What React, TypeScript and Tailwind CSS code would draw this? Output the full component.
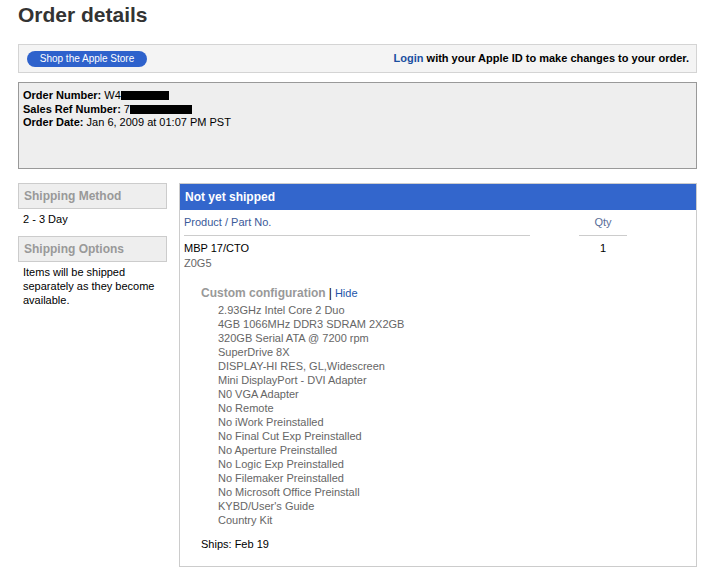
const configItems = [
  '2.93GHz Intel Core 2 Duo',
  '4GB 1066MHz DDR3 SDRAM 2X2GB',
  '320GB Serial ATA @ 7200 rpm',
  'SuperDrive 8X',
  'DISPLAY-HI RES, GL,Widescreen',
  'Mini DisplayPort - DVI Adapter',
  'N0 VGA Adapter',
  'No Remote',
  'No iWork Preinstalled',
  'No Final Cut Exp Preinstalled',
  'No Aperture Preinstalled',
  'No Logic Exp Preinstalled',
  'No Filemaker Preinstalled',
  'No Microsoft Office Preinstall',
  "KYBD/User's Guide",
  'Country Kit',
];

const SideHeader = ({ label }: { label: string }) => (
  <div className="h-[26px] border border-[#cccccc] bg-[#eeeeee] px-[5px] flex items-center text-[12px] font-bold text-[#999999]">
    {label}
  </div>
);

export default function App() {
  return (
    <div className="w-[709px] min-h-[580px] bg-white pl-[18px] pr-[12px] font-['Liberation_Sans',Arial,sans-serif] text-[11px] text-black">
      <h1 className="pt-[3px] text-[21px] leading-[24px] font-bold text-[#333333]">Order details</h1>

      {/* login bar */}
      <div className="mt-[17px] h-[29px] border border-[#d4d4d4] bg-[#f4f4f4] pl-[8px] pr-[7px] flex items-center justify-between">
        <button className="h-[16px] w-[120px] rounded-full bg-[#2e62cc] text-[10px] leading-[16px] text-white">
          Shop the Apple Store
        </button>
        <p className="font-bold text-[11px]">
          <span className="text-[#1a4fa0]">Login</span> with your Apple ID to make changes to your order.
        </p>
      </div>

      {/* order info */}
      <div className="mt-[9px] h-[87px] border border-[#999999] bg-[#eeeeee] px-[4px] pt-[6px] leading-[13.5px]">
        <div>
          <b>Order Number:</b> W4<span className="inline-block w-[48px] h-[9px] bg-black align-[-1px]" />
        </div>
        <div>
          <b>Sales Ref Number:</b> 7<span className="inline-block w-[62px] h-[9px] bg-black align-[-1px]" />
        </div>
        <div>
          <b>Order Date:</b> Jan 6, 2009 at 01:07 PM PST
        </div>
      </div>

      <div className="mt-[14px] flex gap-[12px]">
        {/* left column */}
        <div className="w-[149px] shrink-0">
          <SideHeader label="Shipping Method" />
          <p className="px-[5px] pt-[3px] pb-[10px] leading-[14px]">2 - 3 Day</p>
          <SideHeader label="Shipping Options" />
          <p className="px-[5px] pt-[3px] leading-[14px]">
            Items will be shipped separately as they become available.
          </p>
        </div>

        {/* shipment panel */}
        <div className="flex-1 h-[384px] border border-[#cccccc]">
          <div className="h-[26px] bg-[#3366cc] px-[5px] flex items-center text-[12px] font-bold text-white">
            Not yet shipped
          </div>
          <div className="px-[4px]">
            <div className="flex items-end h-[26px]">
              <div className="w-[346px] h-full border-b border-[#cccccc] flex items-center text-[#3a5a99]">
                Product / Part No.
              </div>
              <div className="ml-[49px] w-[48px] h-full border-b border-[#cccccc] flex items-center justify-center text-[#5a6e99]">
                Qty
              </div>
            </div>
            <div className="flex pt-[5px]">
              <div className="w-[346px] leading-[15px]">
                <div>MBP 17/CTO</div>
                <div className="text-[#666666]">Z0G5</div>
              </div>
              <div className="ml-[49px] w-[48px] text-center leading-[15px]">1</div>
            </div>
            <div className="pl-[17px] pt-[15px]">
              <div className="leading-[15px]">
                <span className="text-[12px] font-bold text-[#999999]">Custom configuration</span>{' '}
                <span className="text-[12px]">|</span>{' '}
                <span className="text-[#2255aa]">Hide</span>
              </div>
              <ul className="pl-[17px] pt-[2px] text-[#666666] leading-[14px]">
                {configItems.map((item) => (
                  <li key={item}>{item}</li>
                ))}
              </ul>
              <p className="pt-[10px] leading-[14px]">Ships: Feb 19</p>
            </div>
          </div>
        </div>
      </div>
    </div>
  );
}
